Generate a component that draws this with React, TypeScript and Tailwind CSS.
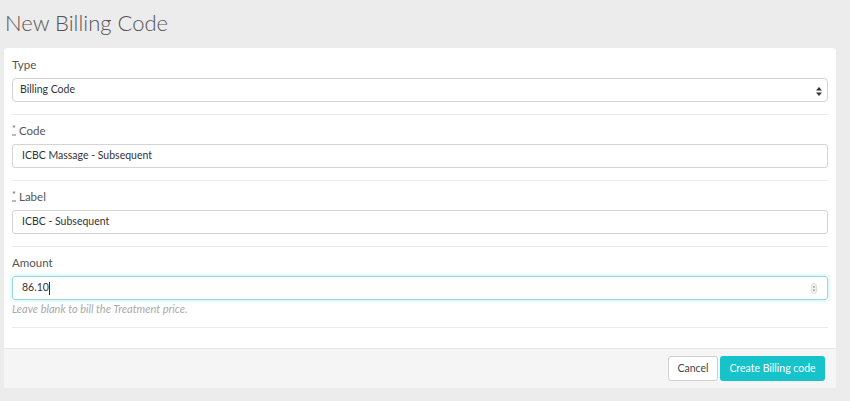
import React from "react";

const font = { fontFamily: "Lato, 'Open Sans', sans-serif" };

function Req() {
  return (
    <span className="relative inline-block w-[4px] mr-[3px] align-top">
      <span className="block text-[9px] leading-[9px] text-[#666] mt-[1px]">*</span>
      <span className="block h-[2px] w-[4px] border-t border-b border-[#bbb] mt-[1px]" />
    </span>
  );
}

function Label({ children }: { children: React.ReactNode }) {
  return <div className="h-[16px] mb-[5px] text-[11.5px] leading-[16px] text-[#555]">{children}</div>;
}

export default function App() {
  return (
    <div className="h-[401px] w-full bg-[#ececec] overflow-hidden" style={font}>
      <h1 className="h-[48px] pl-[5px] pt-[8px] text-[22px] leading-[30px] font-light text-[#555]">New Billing Code</h1>
      <div className="ml-[4px] mr-[14px] h-[340px] bg-white rounded-[3px] flex flex-col">
        <div className="flex-1 px-[8px]">
          <div className="pt-[9px] pb-[12px] border-b border-[#ececec]">
            <Label>Type</Label>
            <div className="relative h-[24px] rounded-[4px] border border-[#d4d4d4] bg-white flex items-center pl-[7px] text-[10.5px] text-[#333]">
              Billing Code
              <svg className="absolute right-[5px] top-[8px]" width="6" height="9" viewBox="0 0 6 9">
                <path d="M3 0 L6 3.5 H0 Z" fill="#333" />
                <path d="M3 9 L6 5.5 H0 Z" fill="#333" />
              </svg>
            </div>
          </div>
          <div className="pt-[8px] pb-[12px] border-b border-[#ececec]">
            <Label>
              <Req />Code
            </Label>
            <div className="h-[24px] rounded-[3px] border border-[#d4d4d4] flex items-center pl-[9px] text-[10.5px] text-[#333]">
              ICBC Massage - Subsequent
            </div>
          </div>
          <div className="pt-[8px] pb-[12px] border-b border-[#ececec]">
            <Label>
              <Req />Label
            </Label>
            <div className="h-[24px] rounded-[3px] border border-[#d4d4d4] flex items-center pl-[9px] text-[10.5px] text-[#333]">
              ICBC - Subsequent
            </div>
          </div>
          <div className="pt-[8px] pb-[12px] border-b border-[#ececec]">
            <Label>Amount</Label>
            <div className="relative h-[24px] rounded-[3px] border border-[#9ad9dd] shadow-[0_0_4px_rgba(23,195,203,0.35)] flex items-center pl-[9px] text-[10.5px] text-[#333]">
              86.10<span className="inline-block w-px h-[13px] bg-[#333]" />
              <svg className="absolute right-[10px] top-[6px]" width="6" height="11" viewBox="0 0 6 11">
                <rect x="0.5" y="0.5" width="5" height="10" rx="2.5" fill="#f4f4f4" stroke="#ccc" strokeWidth="0.6" />
                <path d="M3 2.5 L4.5 4.5 H1.5 Z" fill="#999" />
                <path d="M3 8.5 L4.5 6.5 H1.5 Z" fill="#999" />
              </svg>
            </div>
            <div className="mt-[3px] text-[11px] leading-[12px] italic text-[#aaa]">Leave blank to bill the Treatment price.</div>
          </div>
        </div>
        <div className="h-[40px] bg-[#f5f5f5] border-t border-[#e6e6e6] rounded-b-[3px] flex items-start justify-end gap-[2px] pt-[7px] pr-[11px]">
          <button className="h-[25px] w-[50px] rounded-[3px] border border-[#d0d0d0] bg-white text-[10.5px] text-[#444]">Cancel</button>
          <button className="h-[25px] w-[105px] rounded-[3px] bg-[#17c3cb] text-[10.5px] text-white">Create Billing code</button>
        </div>
      </div>
    </div>
  );
}
